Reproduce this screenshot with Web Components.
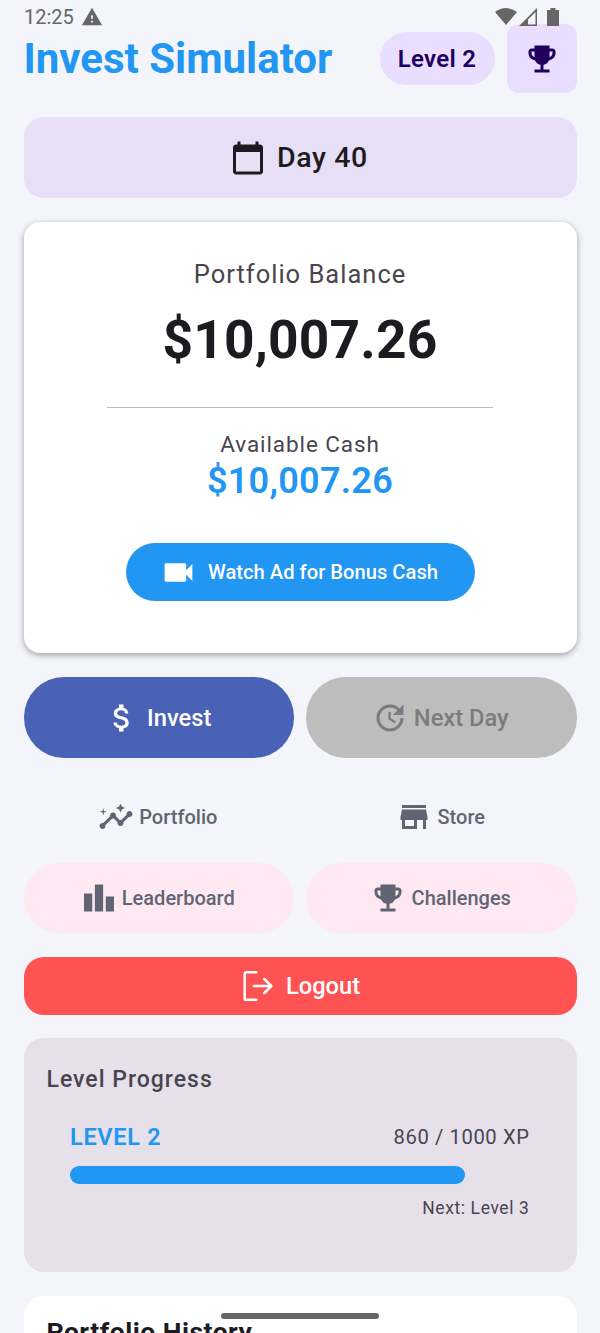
<!DOCTYPE html>
<html>
<head>
<meta charset="utf-8">
<title>Invest Simulator</title>
<style>
html, body { margin: 0; padding: 0; height: 1333px; overflow: hidden; background: #f4f5fb; font-family: Roboto, sans-serif; }
</style>
</head>
<body>
<invest-app></invest-app>
<script>
const ICONS = {
    trophy: '<path d="M19 5h-2V3H7v2H5c-1.1 0-2 .9-2 2v1c0 2.55 1.92 4.63 4.39 4.94.63 1.5 1.98 2.63 3.61 2.96V19H7v2h10v-2h-4v-3.1c1.63-.33 2.98-1.46 3.61-2.96C19.08 12.63 21 10.55 21 8V7c0-1.1-.9-2-2-2zM5 8V7h2v3.82C5.84 10.4 5 9.3 5 8zm14 0c0 1.3-.84 2.4-2 2.82V7h2v1z"/>',
    calendar: '<path d="M20 3h-1V1h-2v2H7V1H5v2H4c-1.1 0-2 .9-2 2v16c0 1.1.9 2 2 2h16c1.1 0 2-.9 2-2V5c0-1.1-.9-2-2-2zm0 18H4V8h16v13z"/>',
    video: '<path d="M17 10.5V7c0-.55-.45-1-1-1H4c-.55 0-1 .45-1 1v10c0 .55.45 1 1 1h12c.55 0 1-.45 1-1v-3.5l4 4v-11l-4 4z"/>',
    dollar: '<path d="M11.8 10.9c-2.27-.59-3-1.2-3-2.15 0-1.09 1.01-1.85 2.7-1.85 1.78 0 2.44.85 2.5 2.1h2.21c-.07-1.72-1.12-3.3-3.21-3.81V3h-3v2.16c-1.94.42-3.5 1.68-3.5 3.61 0 2.31 1.91 3.46 4.7 4.13 2.5.6 3 1.48 3 2.41 0 .69-.49 1.79-2.7 1.79-2.06 0-2.87-.92-2.98-2.1h-2.2c.12 2.19 1.76 3.42 3.68 3.83V21h3v-2.15c1.95-.37 3.5-1.5 3.5-3.55 0-2.84-2.43-3.81-4.7-4.4z"/>',
    update: '<path d="M11 8v5l4.25 2.52.77-1.28-3.52-2.09V8H11zm10 2V3l-2.64 2.64C16.74 4.01 14.49 3 12 3a9 9 0 1 0 9 9h-2a7 7 0 1 1-7-7c1.93 0 3.68.79 4.95 2.05L14 10h7z"/>',
    insights: '<path d="M21 8c-1.45 0-2.26 1.44-1.93 2.51l-3.55 3.56c-.3-.09-.74-.09-1.04 0l-2.55-2.55C12.27 10.45 11.46 9 10 9c-1.45 0-2.27 1.44-1.93 2.52l-4.56 4.55C2.44 15.74 1 16.55 1 18c0 1.1.9 2 2 2 1.45 0 2.26-1.44 1.93-2.51l4.55-4.56c.3.09.74.09 1.04 0l2.55 2.55C12.73 16.55 13.54 18 15 18c1.45 0 2.27-1.44 1.93-2.52l3.56-3.55c1.07.33 2.51-.48 2.51-1.93 0-1.1-.9-2-2-2z"/><path d="m15 9 .94-2.07L18 6l-2.06-.93L15 3l-.92 2.07L12 6l2.08.93zM3.5 11 4 9l2-.5L4 8l-.5-2L3 8l-2 .5L3 9z"/>',
    store: '<path d="M20 4H4v2h16V4zm1 10v-2l-1-5H4l-1 5v2h1v6h10v-6h4v6h2v-6h1zm-9 4H6v-4h6v4z"/>',
    bars: '<path d="M7.5 21H2V9h5.5v12zm7.25-18h-5.500v18h5.500V3zM22 11h-5.500v10H22V11z"/>',
    logout: '<path fill="none" stroke="currentColor" stroke-width="1.500" stroke-linecap="round" stroke-linejoin="round" d="M11 3.700H5a1 1 0 0 0-1 1v14.600a1 1 0 0 0 1 1h6M9.500 12H20M15.800 7.800 20 12l-4.200 4.200"/>',
    warning: '<path d="M1 21h22L12 2 1 21zm12-3h-2v-2h2v2zm0-4h-2v-4h2v4z"/>'
};

function icon(name, size, color) {
    return `<svg width="${size}" height="${size}" viewBox="0 0 24 24" fill="${color}" style="display:block;flex:none;color:${color}">${ICONS[name]}</svg>`;
}

// status bar lies over the header, like on the device
class StatusBar extends HTMLElement {
    constructor() {
        super();
        this.attachShadow({ mode: 'open' });
    }
    connectedCallback() {
        this.shadowRoot.innerHTML = `
        <style>
            :host { position: absolute; top: 0; left: 0; width: 600px; height: 34px; z-index: 2; }
            .time { position: absolute; left: 24px; top: 7px; font: 400 20px/20px Roboto, sans-serif; color: #666; }
            .warn { position: absolute; left: 81px; top: 6px; }
            svg.r { position: absolute; left: 490px; top: 5px; }
        </style>
        <span class="time">12:25</span>
        <span class="warn">${icon('warning', 22, '#666')}</span>
        <svg class="r" width="80" height="24" viewBox="0 0 80 24" fill="#666">
            <path d="M5 7Q16-1 27 7L16 20z"/>
            <path fill-rule="evenodd" d="M47 3v18H29zM45.500 7v12.500H38V14.500z"/>
            <path d="M57 5h3.500V3h5v2H69v16H57z"/>
        </svg>`;
    }
}

class AppHeader extends HTMLElement {
    constructor() {
        super();
        this.attachShadow({ mode: 'open' });
    }
    connectedCallback() {
        this.shadowRoot.innerHTML = `
        <style>
            :host { display: flex; align-items: center; height: 69px; }
            h1 { margin: 0; flex: 1; font: 700 42px/46px Roboto, sans-serif; color: #2196f3; }
            .chip { width: 115px; height: 53px; margin-right: 12px; border-radius: 27px; background: #e9defd; color: #21005d;
                display: flex; align-items: center; justify-content: center; font: 600 24px Roboto, sans-serif; letter-spacing: .3px; }
            .btn { width: 70px; height: 69px; border-radius: 12px; background: #e9defd; display: flex; align-items: center; justify-content: center; }
        </style>
        <h1>Invest Simulator</h1>
        <div class="chip">Level 2</div>
        <div class="btn">${icon('trophy', 36, '#21005d')}</div>`;
    }
}

class DayBanner extends HTMLElement {
    constructor() {
        super();
        this.attachShadow({ mode: 'open' });
    }
    connectedCallback() {
        this.shadowRoot.innerHTML = `
        <style>
            :host { display: flex; align-items: center; justify-content: center; gap: 11px; height: 81px; box-sizing: border-box; padding-right: 2px; border-radius: 20px;
                background: #e6dff6; color: #1d1b20; font: 500 28.500px Roboto, sans-serif; letter-spacing: .6px; }
        </style>
        ${icon('calendar', 36, '#1d1b20')}<span>Day <slot></slot></span>`;
    }
}

class ActionButton extends HTMLElement {
    constructor() {
        super();
        this.attachShadow({ mode: 'open' });
    }
    connectedCallback() {
        const h = this.getAttribute('h') || 58;
        const bg = this.getAttribute('bg') || 'transparent';
        const fg = this.getAttribute('fg') || '#fff';
        const radius = this.getAttribute('r') || 40;
        const fs = this.getAttribute('fs') || 23.7;
        const gap = this.getAttribute('gap') || 12;
        const isize = this.getAttribute('isize') || 36;
        this.shadowRoot.innerHTML = `
        <style>
            :host { display: flex; align-items: center; justify-content: center; gap: ${gap}px; height: ${h}px; flex: 1 1 0; box-sizing: border-box; padding-right: 2px;
                border-radius: ${radius}px; background: ${bg}; color: ${fg}; font: 500 ${fs}px Roboto, sans-serif; }
        </style>
        ${icon(this.getAttribute('icon'), isize, fg)}<span><slot></slot></span>`;
    }
}

class BalanceCard extends HTMLElement {
    constructor() {
        super();
        this.attachShadow({ mode: 'open' });
    }
    connectedCallback() {
        this.shadowRoot.innerHTML = `
        <style>
            :host { display: flex; flex-direction: column; align-items: center; height: 431px; box-sizing: border-box; padding-top: 36px;
                background: #fff; border-radius: 16px; box-shadow: 0 2px 6px rgba(0,0,0,.35); }
            .label { font: 400 25.500px/32px Roboto, sans-serif; color: #49454f; letter-spacing: 1px; }
            .total { font: 700 53.300px/62px Roboto, sans-serif; color: #1c1b1f; margin-top: 19px; letter-spacing: .2px; }
            hr { width: 386px; height: 1px; border: 0; background: #bdbdbd; margin: 36px 0 23px; }
            .cash-label { font: 400 22.500px/26px Roboto, sans-serif; color: #49454f; letter-spacing: .9px; }
            .cash { font: 600 36px/44px Roboto, sans-serif; color: #2196f3; margin-top: 2px; letter-spacing: .3px; }
            .wrap { margin-top: 40px; width: 349px; display: flex; }
        </style>
        <div class="label">Portfolio Balance</div>
        <div class="total">$10,007.26</div>
        <hr>
        <div class="cash-label">Available Cash</div>
        <div class="cash">$10,007.26</div>
        <div class="wrap"><action-button h="58" bg="#2196f3" icon="video" fs="20.200" isize="37" gap="11">Watch Ad for Bonus Cash</action-button></div>`;
    }
}

class LevelProgress extends HTMLElement {
    constructor() {
        super();
        this.attachShadow({ mode: 'open' });
    }
    connectedCallback() {
        this.shadowRoot.innerHTML = `
        <style>
            :host { display: block; height: 234px; box-sizing: border-box; padding: 28px 23px 0; border-radius: 20px; background: #e5e0ea; }
            h2 { margin: 0; font: 500 23px/28px Roboto, sans-serif; color: #49454f; letter-spacing: 1px; }
            .body { padding: 28px 24px 0 23.500px; }
            .row { display: flex; justify-content: space-between; align-items: center; height: 30px; }
            .lvl { font: 600 23.500px Roboto, sans-serif; color: #2196f3; letter-spacing: .7px; }
            .xp { font: 400 20.200px Roboto, sans-serif; color: #49454f; letter-spacing: .6px; }
            .track { height: 18px; margin-top: 14px; border-radius: 9px; }
            .fill { height: 100%; width: 86%; border-radius: 9px; background: #2196f3; }
            .next { margin-top: 12px; text-align: right; font: 400 17.500px/24px Roboto, sans-serif; color: #49454f; letter-spacing: .6px; }
        </style>
        <h2>Level Progress</h2>
        <div class="body">
            <div class="row"><span class="lvl">LEVEL 2</span><span class="xp">860 / 1000 XP</span></div>
            <div class="track"><div class="fill"></div></div>
            <div class="next">Next: Level 3</div>
        </div>`;
    }
}

class HistoryCard extends HTMLElement {
    constructor() {
        super();
        this.attachShadow({ mode: 'open' });
    }
    connectedCallback() {
        this.shadowRoot.innerHTML = `
        <style>
            :host { display: block; height: 200px; box-sizing: border-box; padding: 21px 23px; border-radius: 20px 20px 0 0; background: #fff; }
            h2 { margin: 0; font: 700 26.500px/30px Roboto, sans-serif; color: #1c1b1f; letter-spacing: .5px; }
        </style>
        <h2>Portfolio History</h2>`;
    }
}

class InvestApp extends HTMLElement {
    constructor() {
        super();
        this.attachShadow({ mode: 'open' });
    }
    connectedCallback() {
        this.shadowRoot.innerHTML = `
        <style>
            :host { display: flex; flex-direction: column; gap: 24px; box-sizing: border-box; width: 600px; height: 1333px; padding: 24px 23.500px 0; overflow: hidden; position: relative; }
            app-header, day-banner, balance-card, level-progress, history-card, .row { flex: none; }
            .row { display: flex; gap: 12px; }
            .home { position: absolute; left: 221px; top: 1313px; width: 158px; height: 6px; border-radius: 3px; background: #666; z-index: 2; }
            .nav { margin-top: 8px; }
            .after { margin-top: -4px; }
            level-progress { margin-top: -1px; }
        </style>
        <status-bar></status-bar>
        <app-header></app-header>
        <day-banner>40</day-banner>
        <balance-card></balance-card>
        <div class="row">
            <action-button h="81" bg="#4a62b5" icon="dollar" gap="7">Invest</action-button>
            <action-button h="81" bg="#bdbdbd" fg="#7c7c7c" icon="update" gap="6">Next Day</action-button>
        </div>
        <div class="row nav">
            <action-button h="53" fg="#616573" icon="insights" fs="20" gap="5">Portfolio</action-button>
            <action-button h="53" fg="#616573" icon="store" fs="20" gap="6">Store</action-button>
        </div>
        <div class="row after">
            <action-button h="70" bg="#fee9f3" fg="#616573" icon="bars" fs="20" gap="5">Leaderboard</action-button>
            <action-button h="70" bg="#fee9f3" fg="#616573" icon="trophy" fs="20" gap="6">Challenges</action-button>
        </div>
        <div class="row">
            <action-button h="58" bg="#ff5252" r="20" icon="logout" gap="8" isize="40">Logout</action-button>
        </div>
        <level-progress></level-progress>
        <history-card></history-card>
        <div class="home"></div>`;
    }
}

customElements.define('status-bar', StatusBar);
customElements.define('app-header', AppHeader);
customElements.define('day-banner', DayBanner);
customElements.define('action-button', ActionButton);
customElements.define('balance-card', BalanceCard);
customElements.define('level-progress', LevelProgress);
customElements.define('history-card', HistoryCard);
customElements.define('invest-app', InvestApp);
</script>
</body>
</html>
